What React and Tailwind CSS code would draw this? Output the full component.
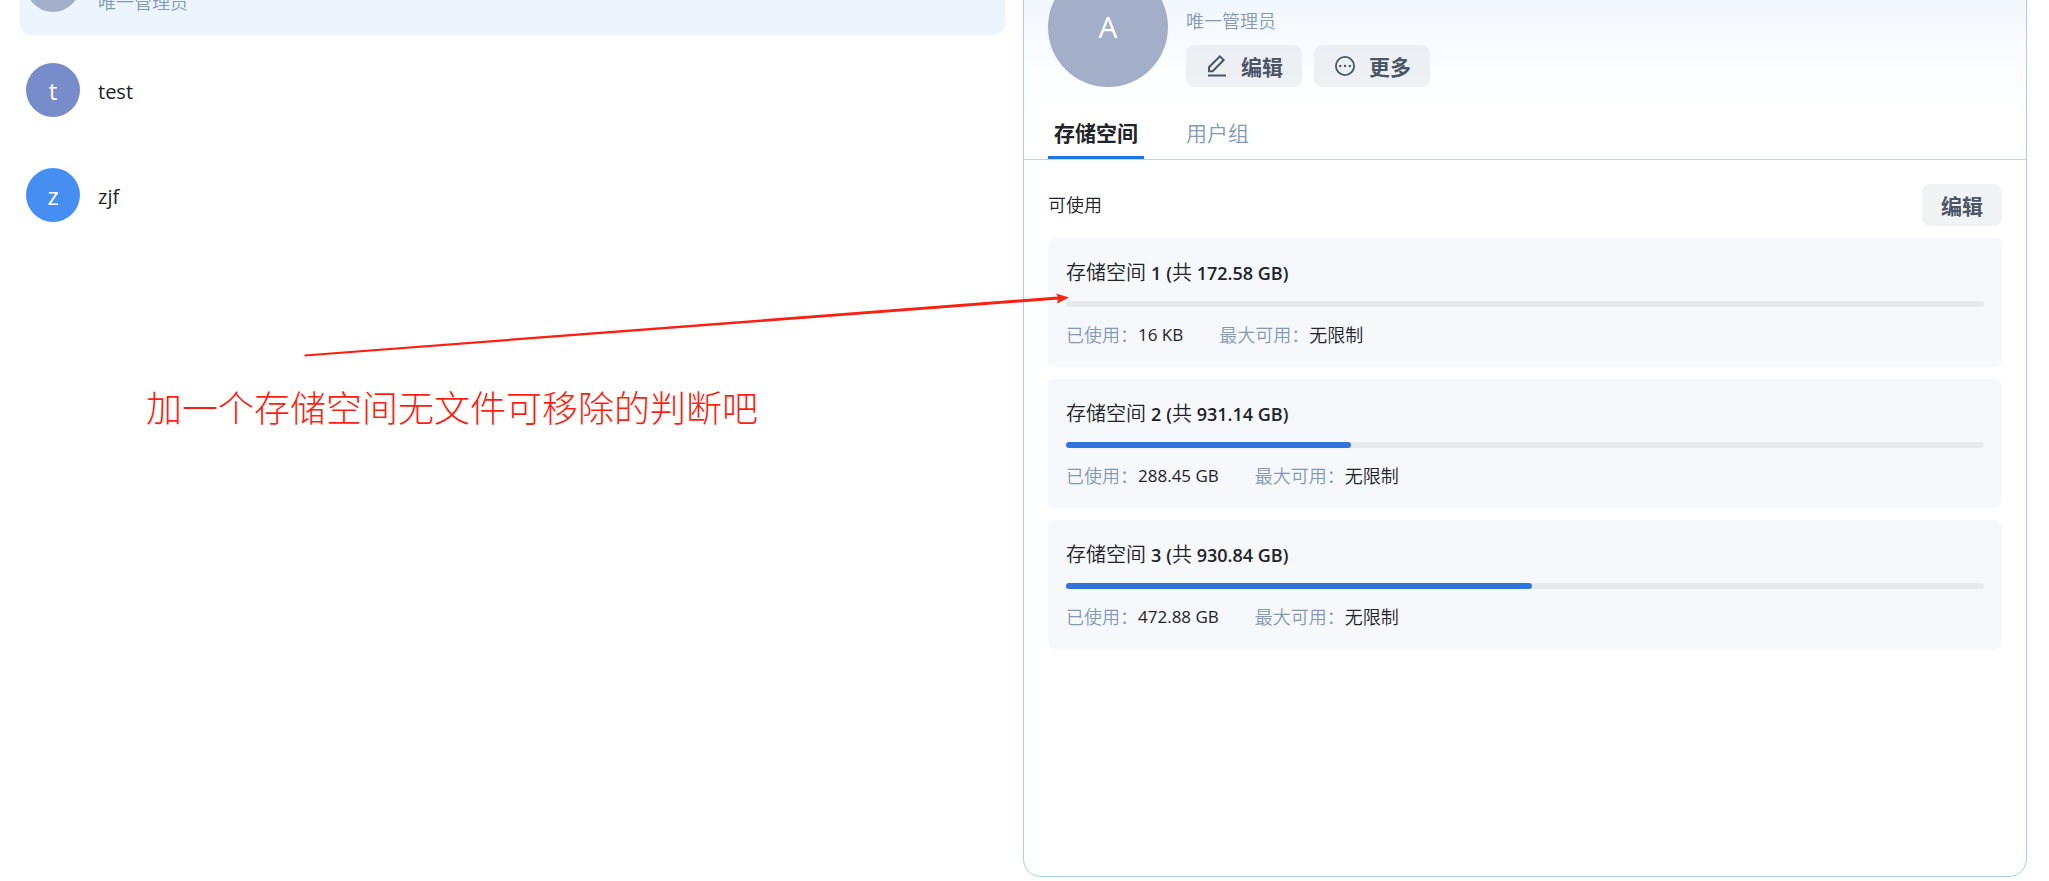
import React, { useState } from "react";

const users = [
  { id: 1, name: "admin", initial: "A", role: "唯一管理员", color: "bg-[#a3afc8]" },
  { id: 2, name: "test", initial: "t", color: "bg-[#788bca]" },
  { id: 3, name: "zjf", initial: "z", color: "bg-[#468ef2]" },
];

const volumes = [
  { id: 1, total: "172.58 GB", used: "16 KB", percent: 0 },
  { id: 2, total: "931.14 GB", used: "288.45 GB", percent: 31 },
  { id: 3, total: "930.84 GB", used: "472.88 GB", percent: 50.8 },
];

const tabs = [
  { key: "storage", label: "存储空间" },
  { key: "groups", label: "用户组" },
];

const buttonClass =
  "flex h-[42px] items-center gap-3 rounded-lg bg-[#4a5568]/7 px-[19px] pt-0.5 text-[21px] leading-7 font-bold text-[#4a5568]";

const EditIcon = () => (
  <svg className="-mt-0.5 size-6" viewBox="0 0 24 24" fill="none" stroke="currentColor" strokeWidth="2">
    <path d="M4 17.2v-4L14.9 2.4 18.6 6 7.7 17.2z" />
    <path d="M3 21.5h18" />
  </svg>
);

const MoreIcon = () => (
  <svg className="-mt-0.5 size-6" viewBox="0 0 24 24" fill="none" stroke="currentColor" strokeWidth="1.8">
    <circle cx="12" cy="12" r="9.1" />
    <g fill="currentColor" stroke="none">
      <circle cx="7.2" cy="12" r="1.2" />
      <circle cx="12" cy="12" r="1.2" />
      <circle cx="16.8" cy="12" r="1.2" />
    </g>
  </svg>
);

const UserRow = ({ user, selected }) => (
  <li
    className={`flex h-[100px] items-center gap-[18px] rounded-xl px-1.5 ${
      selected ? "bg-[#ecf4fd]" : ""
    }`}
  >
    <span
      className={`flex size-[54px] items-center justify-center rounded-full pt-0.5 text-2xl leading-7 text-white ${user.color}`}
    >
      {user.initial}
    </span>
    <div className="pt-1">
      <p className="text-xl leading-7 font-medium">{user.name}</p>
      {user.role && <p className="mt-0.5 text-lg leading-7 font-[350] text-[#8399b5]">{user.role}</p>}
    </div>
  </li>
);

const VolumeCard = ({ volume }) => (
  <li className="rounded-md bg-[#f7f8fc] px-[18px] pt-[19px] pb-[18px]">
    <h3 className="flex items-center gap-[5px] text-lg leading-8 font-semibold">
      <span className="text-xl font-[350]">存储空间</span>
      <span>{volume.id}</span>
      <span>
        (<span className="text-xl font-[350]">共</span> {volume.total})
      </span>
    </h3>
    <div className="mt-3 h-1.5 rounded-full bg-[#e8e9ed]">
      <div className="h-full rounded-full bg-[#3274de]" style={{ width: `${volume.percent}%` }} />
    </div>
    <dl className="mt-3.5 flex gap-9 text-lg leading-7 font-[350]">
      <div className="flex">
        <dt className="text-[#8399b5]">已使用：</dt>
        <dd className="text-[17px] font-normal">{volume.used}</dd>
      </div>
      <div className="flex">
        <dt className="text-[#8399b5]">最大可用：</dt>
        <dd>无限制</dd>
      </div>
    </dl>
  </li>
);

const Annotation = () => (
  <div className="pointer-events-none absolute top-0 left-0 text-[#ff1e10]">
    <svg className="absolute top-[280px] left-[300px] h-20 w-[780px]" viewBox="300 280 780 80" fill="currentColor">
      <path d="M304.500 354.500L1058 296.500L1056 293.500L1069 297.500L1057 303.500L1058 299.500L304.500 356.500Z" />
    </svg>
    <p className="absolute top-[383px] left-[146px] text-4xl leading-[52px] font-light whitespace-nowrap">
      加一个存储空间无文件可移除的判断吧
    </p>
  </div>
);

const App = () => {
  const [activeTab, setActiveTab] = useState("storage");

  return (
    <main className="relative flex min-h-screen overflow-hidden bg-white pr-[3px] font-['Open_Sans','Noto_Sans_CJK_SC',sans-serif] text-[#212429]">
      <section className="w-1/2 pr-[18px] pl-5">
        <ul className="-mt-[65px] flex flex-col gap-[5px]">
          {users.map((user) => (
            <UserRow key={user.id} user={user} selected={user.id === 1} />
          ))}
        </ul>
      </section>

      <section className="flex w-1/2 flex-col pr-[19px] pb-1">
        <div className="-mt-[60px] flex-1 rounded-[18px] border border-[#a9cbf8] bg-linear-to-b from-[#ecf4fd] to-white to-[170px] pt-[26px]">
          <header className="flex gap-[18px] px-6">
            <span className="flex size-[120px] items-center justify-center rounded-full bg-[#a3afc8] text-3xl text-white">
              A
            </span>
            <div className="flex flex-col justify-end">
              <h2 className="text-2xl leading-9 font-semibold">admin</h2>
              <p className="mb-2.5 text-lg leading-7 font-[350] text-[#8399b5]">唯一管理员</p>
              <div className="flex gap-3">
                <button type="button" className={buttonClass}>
                  <EditIcon />
                  编辑
                </button>
                <button type="button" className={buttonClass}>
                  <MoreIcon />
                  更多
                </button>
              </div>
            </div>
          </header>

          <nav className="mt-6 flex gap-9 border-b border-[#c6d4e3] px-6">
            {tabs.map((tab) => (
              <button
                key={tab.key}
                type="button"
                onClick={() => setActiveTab(tab.key)}
                className={`h-12 border-b-3 px-1.5 pb-0.5 text-[21px] leading-7 ${
                  activeTab === tab.key
                    ? "border-[#1f72e8] font-bold"
                    : "border-transparent font-[350] text-[#8399b5]"
                }`}
              >
                {tab.label}
              </button>
            ))}
          </nav>

          <div className="px-6 pt-6">
            <div className="flex items-center justify-between">
              <h3 className="text-lg leading-7 font-[350]">可使用</h3>
              <button type="button" className={buttonClass}>
                编辑
              </button>
            </div>
            <ul className="mt-3 flex flex-col gap-3">
              {volumes.map((volume) => (
                <VolumeCard key={volume.id} volume={volume} />
              ))}
            </ul>
          </div>
        </div>
      </section>

      <Annotation />
    </main>
  );
};

export default App;
